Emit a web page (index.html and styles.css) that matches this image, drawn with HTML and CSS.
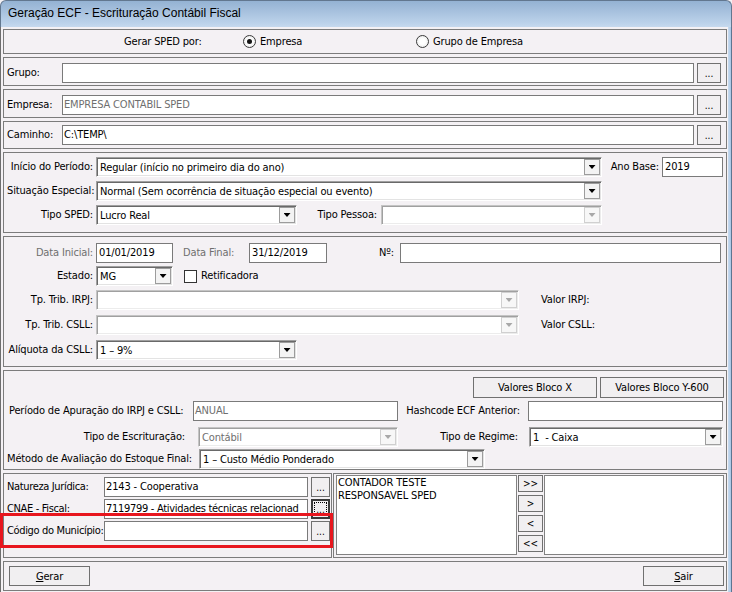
FILE: index.html
```html
<!DOCTYPE html>
<html lang="pt-BR">
<head>
<meta charset="utf-8">
<title>Geração ECF - Escrituração Contábil Fiscal</title>
<link rel="stylesheet" href="styles.css">
</head>
<body>
<div class="window">
  <div class="titlebar">Geração ECF - Escrituração Contábil Fiscal</div>
  <div class="client">
    <div class="content">

      <div class="panel p-sped">
        <span class="sped-label">Gerar SPED por:</span>
        <span class="radio-opt opt-empresa"><span class="radio on"></span>Empresa</span>
        <span class="radio-opt"><span class="radio"></span>Grupo de Empresa</span>
      </div>

      <div class="panel p-field">
        <span class="lbl lbl-field">Grupo:</span>
        <span class="edit edit-path"></span>
        <span class="btn-dots">...</span>
      </div>

      <div class="panel p-field">
        <span class="lbl lbl-field">Empresa:</span>
        <span class="edit edit-path grey-text">EMPRESA CONTABIL SPED</span>
        <span class="btn-dots">...</span>
      </div>

      <div class="panel p-field p-caminho">
        <span class="lbl lbl-field">Caminho:</span>
        <span class="edit edit-path">C:\TEMP\</span>
        <span class="btn-dots">...</span>
      </div>

      <div class="panel p-periodo">
        <div class="row">
          <span class="lbl lbl-a">Início do Período:</span>
          <span class="combo w506"><span class="combo-text">Regular (início no primeiro dia do ano)</span><span class="combo-btn"></span></span>
          <span class="lbl lbl-ano">Ano Base:</span>
          <span class="edit w61 pad2">2019</span>
        </div>
        <div class="row gap4">
          <span class="lbl lbl-a">Situação Especial:</span>
          <span class="combo w506"><span class="combo-text">Normal (Sem ocorrência de situação especial ou evento)</span><span class="combo-btn"></span></span>
        </div>
        <div class="row gap4">
          <span class="lbl lbl-a">Tipo SPED:</span>
          <span class="combo w201"><span class="combo-text">Lucro Real</span><span class="combo-btn"></span></span>
          <span class="lbl lbl-pessoa">Tipo Pessoa:</span>
          <span class="combo w221 disabled"><span class="combo-text"></span><span class="combo-btn"></span></span>
        </div>
      </div>

      <div class="panel p-datas">
        <div class="row">
          <span class="lbl lbl-a grey-text">Data Inicial:</span>
          <span class="edit w77 pad2">01/01/2019</span>
          <span class="lbl lbl-dfinal grey-text">Data Final:</span>
          <span class="edit w78 pad2">31/12/2019</span>
          <span class="lbl lbl-num">Nº:</span>
          <span class="edit w321"></span>
        </div>
        <div class="row gap3">
          <span class="lbl lbl-a">Estado:</span>
          <span class="combo w77"><span class="combo-text">MG</span><span class="combo-btn"></span></span>
          <span class="checkbox"></span>
          <span class="lbl check-lbl">Retificadora</span>
        </div>
        <div class="row gap4">
          <span class="lbl lbl-a">Tp. Trib. IRPJ:</span>
          <span class="combo w423 disabled"><span class="combo-text"></span><span class="combo-btn"></span></span>
          <span class="lbl lbl-valor">Valor IRPJ:</span>
        </div>
        <div class="row gap5">
          <span class="lbl lbl-a">Tp. Trib. CSLL:</span>
          <span class="combo w423 disabled"><span class="combo-text"></span><span class="combo-btn"></span></span>
          <span class="lbl lbl-valor">Valor CSLL:</span>
        </div>
        <div class="row gap5">
          <span class="lbl lbl-a">Alíquota da CSLL:</span>
          <span class="combo w201"><span class="combo-text">1 – 9%</span><span class="combo-btn"></span></span>
        </div>
      </div>

      <div class="panel p-apur">
        <div class="row row-btns">
          <span class="btn w124">Valores Bloco X</span>
          <span class="btn w124">Valores Bloco Y-600</span>
        </div>
        <div class="row gap3">
          <span class="lbl lbl-apur">Período de Apuração do IRPJ e CSLL:</span>
          <span class="edit w205 grey-text">ANUAL</span>
          <span class="lbl lbl-hash">Hashcode ECF Anterior:</span>
          <span class="edit w195"></span>
        </div>
        <div class="row gap6">
          <span class="lbl lbl-escr">Tipo de Escrituração:</span>
          <span class="combo w200 disabled"><span class="combo-text grey-text">Contábil</span><span class="combo-btn"></span></span>
          <span class="lbl lbl-regime">Tipo de Regime:</span>
          <span class="combo w194"><span class="combo-text">1&nbsp; - Caixa</span><span class="combo-btn"></span></span>
        </div>
        <div class="row gap2">
          <span class="lbl lbl-metodo">Método de Avaliação do Estoque Final:</span>
          <span class="combo w286"><span class="combo-text">1 – Custo Médio Ponderado</span><span class="combo-btn"></span></span>
        </div>
      </div>

      <div class="p-split">
        <div class="panel p-left">
          <div class="row">
            <span class="lbl lbl-nat">Natureza Jurídica:</span>
            <span class="edit w204">2143 - Cooperativa</span>
            <span class="btn-dots small">...</span>
          </div>
          <div class="row gap2">
            <span class="lbl lbl-nat">CNAE - Fiscal:</span>
            <span class="edit w204 tight">7119799 - Atividades técnicas relacionad</span>
            <span class="btn-dots small focused">...</span>
          </div>
          <div class="row gap2">
            <span class="lbl lbl-nat">Código do Município:</span>
            <span class="edit w204"></span>
            <span class="btn-dots small">...</span>
          </div>
        </div>
        <div class="panel p-right">
          <div class="listbox w181">
            <div>CONTADOR TESTE</div>
            <div>RESPONSAVEL SPED</div>
          </div>
          <div class="move-col">
            <span class="btn move">&gt;&gt;</span>
            <span class="btn move">&gt;</span>
            <span class="btn move">&lt;</span>
            <span class="btn move">&lt;&lt;</span>
          </div>
          <div class="listbox w180"></div>
        </div>
      </div>

      <div class="panel p-bottom">
        <span class="btn w81 tall"><u>G</u>erar</span>
        <span class="btn w81 tall"><u>S</u>air</span>
      </div>

    </div>
    <div class="frame-r"></div>
  </div>
  <div class="highlight"></div>
</div>
</body>
</html>
```

FILE: styles.css
```css
* { box-sizing: border-box; }
html, body { margin: 0; padding: 0; }
body {
  width: 732px;
  height: 592px;
  overflow: hidden;
  background: #f4f1f4;
  font-family: "DejaVu Sans Condensed", "DejaVu Sans", sans-serif;
  font-stretch: condensed;
  font-size: 11px;
  letter-spacing: -0.15px;
  color: #000;
}
.window {
  position: relative;
  width: 732px;
  height: 592px;
  display: flex;
  flex-direction: column;
  background: #f4f1f4;
}
.titlebar {
  flex: none;
  height: 27px;
  background: linear-gradient(#94b2d3, #bcd2ea 85%, #c6d9ee);
  border: 1px solid #62778f;
  border-bottom: none;
  border-radius: 6px 6px 0 0;
  padding-left: 7px;
  line-height: 25px;
  font-family: "Liberation Sans", Arial, sans-serif;
  font-size: 12px;
  letter-spacing: 0;
  color: #000;
}
.client { flex: 1; display: flex; min-height: 0; }
.content {
  flex: 1;
  border-left: 1px solid #6e6e6e;
  padding: 2px 1px 0 2px;
  display: flex;
  flex-direction: column;
  gap: 3px;
}
.frame-r {
  width: 4px;
  background: linear-gradient(90deg, #c9dcf0, #aac6e5);
  border-right: 1px solid #5d7591;
}
.panel {
  flex: none;
  border: 1px solid #7c7c7c;
}
.row { display: flex; align-items: center; height: 20px; flex: none; }
.gap2 { margin-top: 2px; }
.gap3 { margin-top: 3px; }
.gap4 { margin-top: 4px; }
.gap5 { margin-top: 5px; }
.gap6 { margin-top: 6px; }

.lbl { white-space: nowrap; line-height: 20px; flex: none; }
.grey-text { color: #6f6f6f; }

/* panel 1 */
.p-sped { height: 25px; display: flex; align-items: center; }
.sped-label { margin-left: 120px; width: 119px; white-space: nowrap; }
.radio-opt { display: flex; align-items: center; gap: 4px; white-space: nowrap; }
.opt-empresa { width: 173px; }
.radio {
  position: relative;
  width: 13px;
  height: 13px;
  border-radius: 50%;
  border: 1px solid #3a3a3a;
  background: radial-gradient(circle, #ffffff 35%, #e2e2e2 100%);
  flex: none;
}
.radio.on::after {
  content: "";
  position: absolute;
  left: 3px;
  top: 3px;
  width: 5px;
  height: 5px;
  border-radius: 50%;
  background: #141414;
}

/* path rows */
.p-field { height: 29px; display: flex; align-items: flex-start; padding: 5px 0 0 3px; }
.p-caminho { height: 28px; padding-top: 3px; }
.lbl-field { width: 55px; }

.edit {
  flex: none;
  height: 20px;
  border: 1px solid #7a7a7a;
  background: #fff;
  padding-left: 1px;
  line-height: 18px;
  white-space: nowrap;
  overflow: hidden;
}
.edit.tight { letter-spacing: -0.3px; }
.pad2 { padding-left: 2px; }
.edit-path { width: 632px; }
.w61 { width: 61px; }
.w77 { width: 77px; }
.w78 { width: 78px; }
.w321 { width: 321px; }
.w205 { width: 205px; }
.w195 { width: 195px; }
.w204 { width: 204px; }

.btn-dots {
  flex: none;
  width: 24px;
  height: 20px;
  margin-left: 3px;
  border: 1px solid #707070;
  background: #f1eff1;
  font-size: 10px;
  line-height: 10px;
  display: flex;
  align-items: flex-end;
  justify-content: center;
  padding-bottom: 3px;
  letter-spacing: 0;
}
.btn-dots.small { width: 19px; }
.btn-dots.focused {
  border: 2px solid #3a3a3a;
  outline: 1px dotted #000;
  outline-offset: -4px;
  padding-bottom: 2px;
}

/* combo boxes */
.combo {
  flex: none;
  height: 20px;
  display: flex;
  background: #fff;
  border: 1px solid;
  border-color: #a0a0a0 #ffffff #ffffff #a0a0a0;
  box-shadow: inset 1px 1px 0 #696969, inset -1px -1px 0 #e3e3e3;
}
.combo-text {
  flex: 1;
  padding: 1px 0 0 3px;
  line-height: 17px;
  white-space: nowrap;
  overflow: hidden;
}
.combo-btn {
  flex: none;
  width: 16px;
  margin: 1px 1px 1px 0;
  background: #f3f3f3;
  border: 1px solid #9c9c9c;
  display: flex;
  align-items: center;
  justify-content: center;
}
.combo-btn::after {
  content: "";
  width: 7px;
  height: 4px;
  background: #000;
  clip-path: polygon(0 0, 100% 0, 50% 100%);
}
.combo.disabled {
  border-color: #c4c4c4 #ffffff #ffffff #c4c4c4;
  box-shadow: inset 1px 1px 0 #a0a0a0, inset -1px -1px 0 #ececec;
}
.combo.disabled .combo-btn { border-color: #d0d0d0; background: #f7f7f7; }
.combo.disabled .combo-btn::after { background: #a8a8a8; }
.w506 { width: 506px; }
.w201 { width: 201px; }
.w221 { width: 221px; }
.w423 { width: 423px; }
.w200 { width: 200px; }
.w194 { width: 194px; }
.w286 { width: 286px; }

/* periodo panel */
.p-periodo { height: 81px; padding: 4px 0 0 3px; }
.lbl-a { width: 89px; text-align: right; padding-right: 3px; }
.lbl-ano { width: 60px; text-align: right; padding-right: 3px; }
.lbl-pessoa { width: 84px; text-align: right; padding-right: 4px; }

/* datas panel */
.p-datas { height: 131px; padding: 6px 0 0 3px; }
.lbl-dfinal { width: 76px; padding-left: 10px; }
.lbl-num { width: 73px; text-align: right; padding-right: 6px; }
.checkbox {
  flex: none;
  width: 13px;
  height: 13px;
  margin-left: 11px;
  border: 1px solid #333;
  background: #fff;
}
.check-lbl { margin-left: 4px; }
.lbl-valor { margin-left: 22px; }

/* apuracao panel */
.p-apur { height: 100px; padding: 6px 2px 0 3px; }
.row-btns { height: 21px; justify-content: flex-end; gap: 3px; }
.btn {
  flex: none;
  border: 1px solid #707070;
  background: #f1eff1;
  display: flex;
  align-items: center;
  justify-content: center;
  white-space: nowrap;
}
.row-btns .btn { height: 21px; }
.w124 { width: 124px; }
.lbl-apur { width: 186px; padding-left: 2px; }
.lbl-hash { width: 130px; text-align: right; padding-right: 8px; }
.lbl-escr { width: 191px; text-align: right; padding-right: 13px; }
.lbl-regime { width: 131px; text-align: right; padding-right: 11px; }
.lbl-metodo { width: 192px; }

/* split panel */
.p-split { flex: none; display: flex; gap: 1px; height: 85px; }
.p-left { width: 329px; height: 85px; padding: 3px 0 0 3px; }
.lbl-nat { width: 97px; letter-spacing: -0.35px; }
.p-right { width: 394px; height: 85px; padding: 1px 0 0 2px; display: flex; align-items: flex-start; }
.listbox {
  flex: none;
  height: 80px;
  border: 1px solid #828282;
  background: #fff;
  padding: 0 0 0 1px;
  line-height: 13px;
  white-space: nowrap;
}
.w181 { width: 181px; }
.w180 { width: 180px; margin-left: 1px; }
.move-col { flex: none; margin-left: 1px; display: flex; flex-direction: column; gap: 3px; }
.move { width: 25px; height: 17px; font-size: 10px; line-height: 15px; }

/* bottom */
.p-bottom {
  height: 30px;
  padding: 4px 2px 0 5px;
  display: flex;
  justify-content: space-between;
  align-items: flex-start;
}
.w81 { width: 81px; }
.tall { height: 20px; }

/* annotation overlay */
.highlight {
  position: absolute;
  left: 0;
  top: 513px;
  width: 333px;
  height: 35px;
  border: 3px solid #e8161e;
  pointer-events: none;
}
```
